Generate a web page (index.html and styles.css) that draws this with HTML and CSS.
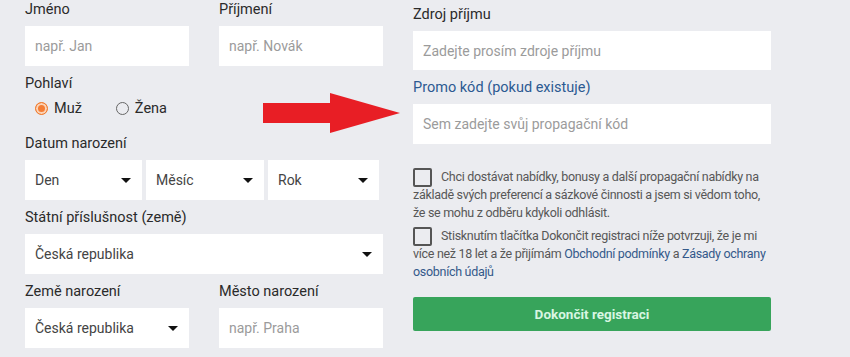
FILE: index.html
```html
<!DOCTYPE html>
<html lang="cs">
<head>
  <meta charset="UTF-8" />
  <meta name="viewport" content="width=device-width, initial-scale=1" />
  <title>Registrace</title>
  <link rel="stylesheet" href="styles.css">
</head>
<body>

  <div class="form">
    <div class="col left">
      <div class="row two">
        <div class="field">
          <label>Jméno</label>
          <input type="text" placeholder="např. Jan" />
        </div>
        <div class="field">
          <label>Příjmení</label>
          <input type="text" placeholder="např. Novák" />
        </div>
      </div>

      <div class="field">
        <label>Pohlaví</label>
        <div class="radios">
          <span class="radio checked"><i></i>Muž</span>
          <span class="radio"><i></i>Žena</span>
        </div>
      </div>

      <div class="field">
        <label>Datum narození</label>
        <div class="dates">
          <div class="select">Den</div>
          <div class="select">Měsíc</div>
          <div class="select">Rok</div>
        </div>
      </div>

      <div class="field">
        <label>Státní příslušnost (země)</label>
        <div class="select">Česká republika</div>
      </div>

      <div class="row two">
        <div class="field">
          <label>Země narození</label>
          <div class="select">Česká republika</div>
        </div>
        <div class="field">
          <label>Město narození</label>
          <input type="text" placeholder="např. Praha" />
        </div>
      </div>

      <div class="field">
        <label>Adresa</label>
      </div>
    </div>

    <div class="col right">
      <div class="field">
        <label>Zdroj příjmu</label>
        <input type="text" class="short" placeholder="Zadejte prosím zdroje příjmu" />
      </div>

      <div class="field">
        <label class="promo">Promo kód (pokud existuje)</label>
        <input type="text" placeholder="Sem zadejte svůj propagační kód" />
      </div>

      <p class="check first"><span class="box"></span>Chci dostávat nabídky, bonusy a další propagační nabídky na základě svých preferencí a sázkové činnosti a jsem si vědom toho, že se mohu z odběru kdykoli odhlásit.</p>
      <p class="check"><span class="box"></span>Stisknutím tlačítka Dokončit registraci níže potvrzuji, že je mi více než 18 let a že přijímám <a href="#">Obchodní podmínky</a> a <a href="#">Zásady ochrany osobních údajů</a></p>

      <button class="submit">Dokončit registraci</button>
    </div>
  </div>

  <svg class="arrow" width="140" height="42" viewBox="0 0 140 42">
    <polygon points="0,10 67,10 67,0 137,20 67,40 67,30 0,30" fill="#e81e25" />
  </svg>

</body>
</html>
```

FILE: styles.css
```css
html, body {
  margin: 0;
  height: 100%;
  overflow: hidden;
}
body {
  background: #ebecf0;
  font-family: Roboto, "Liberation Sans", Arial, sans-serif;
  color: #2a2a2a;
  position: relative;
}
.form {
  display: flex;
  gap: 30px;
  padding-left: 25px;
}
.col {
  width: 358px;
}
.left {
  padding-top: 1px;
}
.right {
  padding-top: 6px;
}
.row.two {
  display: grid;
  grid-template-columns: 164px 164px;
  gap: 30px;
}
.field {
  margin-bottom: 9px;
}
label {
  display: block;
  font-size: 14.5px;
  line-height: 18px;
  margin-bottom: 7px;
}
label.promo {
  color: #2c5a92;
}
input[type="text"], .select {
  display: block;
  width: 100%;
  height: 40px;
  box-sizing: border-box;
  border: none;
  background: #fff;
  padding: 0 10px;
  font-family: inherit;
  font-size: 14px;
  color: #444;
  outline: none;
}
input::placeholder {
  color: #9b9b9b;
}
input.short {
  height: 39px;
}
.select {
  position: relative;
  line-height: 40px;
}
.select::after {
  content: "";
  position: absolute;
  right: 11px;
  top: 18px;
  border-left: 5px solid transparent;
  border-right: 5px solid transparent;
  border-top: 5px solid #111;
}
.dates {
  display: grid;
  grid-template-columns: 117px 118px 111px;
  gap: 4px;
}
.dates .select:first-child {
  margin-right: 1px;
}
.radios {
  display: flex;
  gap: 34px;
  padding-left: 10px;
  margin-top: -5px;
  height: 26px;
  align-items: center;
  margin-bottom: 14px;
}
.radio {
  display: flex;
  align-items: center;
  font-size: 14.5px;
}
.radio i {
  width: 11px;
  height: 11px;
  border: 1.5px solid #666;
  border-radius: 50%;
  margin-right: 6px;
  box-sizing: content-box;
}
.radio.checked i {
  border-color: #f07a2c;
  background: #f47d35;
  box-shadow: inset 0 0 0 2px #fbd4b8;
}
.check {
  font-size: 12.5px;
  letter-spacing: -0.3px;
  line-height: 18px;
  color: #575757;
  margin: 0 0 5px;
}
.check.first {
  margin-top: 24px;
}
.check .box {
  display: inline-block;
  width: 15px;
  height: 15px;
  border: 2px solid #555;
  border-radius: 2px;
  vertical-align: top;
  margin: 0 9px -2px 0;
}
.check a {
  color: #34598a;
  text-decoration: none;
}
.submit {
  display: block;
  width: 100%;
  height: 34px;
  margin-top: 16px;
  border: none;
  border-radius: 2px;
  background: #37a45b;
  color: #d8f6e2;
  font-family: inherit;
  font-weight: bold;
  font-size: 13.5px;
  cursor: pointer;
}
.arrow {
  position: absolute;
  left: 263px;
  top: 93px;
}
```
